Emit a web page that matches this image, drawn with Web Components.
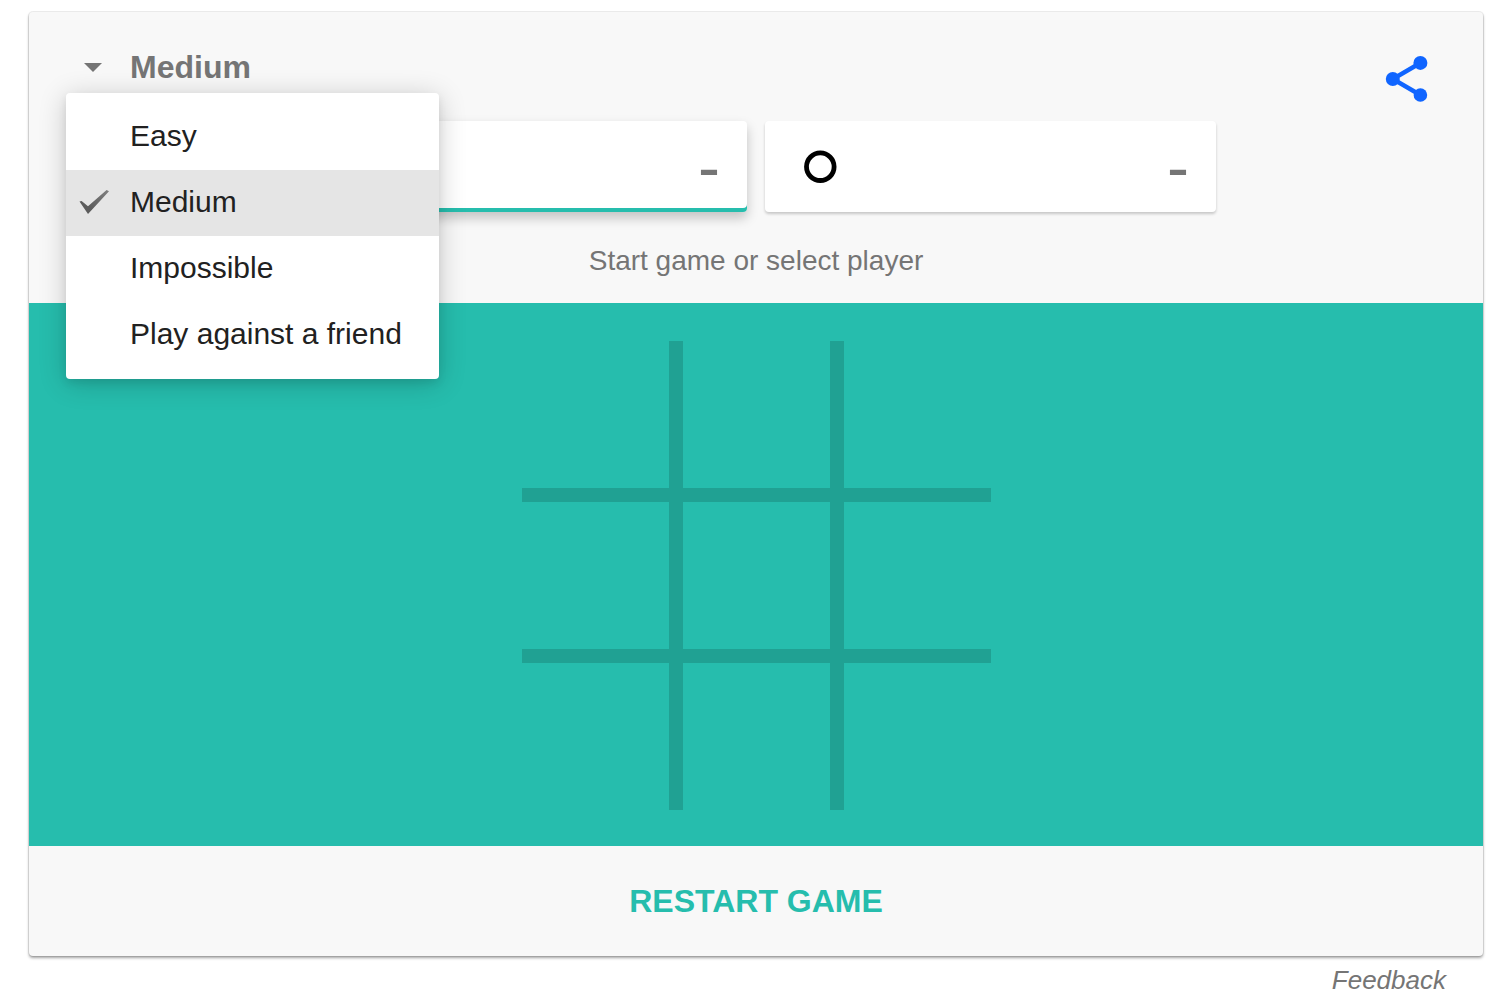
<!DOCTYPE html>
<html lang="en">
<head>
<meta charset="utf-8">
<meta name="viewport" content="width=device-width, initial-scale=1">
<title>Tic-tac-toe</title>
<style>
  body {
    margin: 0;
    padding: 12px 23px 9px 29px;
    background: #fff;
    color: #757575;
    font-family: "Liberation Sans", Arial, sans-serif;
    --teal: #26bdad;
    --line: #20a193;
  }
</style>
</head>
<body>
<game-app></game-app>

<script>
  class Base extends HTMLElement {
    connectedCallback() {
      if (this.shadowRoot) return;
      this.attachShadow({ mode: "open" }).innerHTML =
        `<style>* { box-sizing: border-box } button { font: inherit; color: inherit; background: none; border: 0; padding: 0; margin: 0; cursor: pointer }</style>` + this.render();
      this.ready();
    }
    ready() {}
  }

  customElements.define("level-option", class extends Base {
    render() {
      const on = this.hasAttribute("selected");
      return `<style>
        :host { display: block; color: #212121; font-size: 30px; line-height: 34px }
        :host([selected]) { background: #e5e5e5 }
        button { display: flex; align-items: center; width: 100%; height: 66px; padding: 0 37px 2px 12px; white-space: nowrap; text-align: left }
        .mark { width: 32px; height: 28px; margin-right: 20px; flex: none }
        svg { display: block }
      </style>
      <button type="button" role="menuitemradio" aria-checked="${on}">
        <span class="mark">${on ? `<svg width="32" height="28" viewBox="0 0 32 28" aria-hidden="true">
          <defs><linearGradient id="g" x1="0" y1="1" x2="1" y2="0"><stop offset=".3" stop-color="#5c5c5c"/><stop offset="1" stop-color="#808080"/></linearGradient></defs>
          <path d="M1.5 13.4 L3.6 13 L10 18.2 L28.6 2 L31 3.2 L10 26 Z" fill="url(#g)"/></svg>` : ""}</span>
        <slot></slot>
      </button>`;
    }
  });

  customElements.define("level-picker", class extends Base {
    render() {
      return `<style>
        :host { display: block; position: relative }
        .toggle { display: flex; align-items: center; height: 48px; padding-left: 18px; font-size: 32px; line-height: 36px; font-weight: bold }
        .toggle svg { margin-right: 28px }
        .menu { position: absolute; z-index: 2; top: 50px; left: 0; padding: 11px 0; background: #fff; border-radius: 4px;
          box-shadow: 0 4px 8px rgba(0,0,0,.08), 0 4px 28px rgba(0,0,0,.2) }
        .menu[hidden] { display: none }
      </style>
      <button class="toggle" type="button" aria-haspopup="menu" aria-expanded="true">
        <svg width="18" height="9" viewBox="0 0 18 9" aria-hidden="true"><path d="M0 0H18L9 9Z" fill="#757575"/></svg>Medium</button>
      <div class="menu" role="menu">
        <level-option>Easy</level-option>
        <level-option selected>Medium</level-option>
        <level-option>Impossible</level-option>
        <level-option>Play against a friend</level-option>
      </div>`;
    }
    ready() {
      const toggle = this.shadowRoot.querySelector(".toggle");
      const menu = this.shadowRoot.querySelector(".menu");
      toggle.addEventListener("click", () => {
        menu.hidden = !menu.hidden;
        toggle.setAttribute("aria-expanded", String(!menu.hidden));
      });
    }
  });

  customElements.define("share-button", class extends Base {
    render() {
      return `<style>:host { display: block } button, svg { display: block }</style>
      <button type="button" aria-label="Share">
        <svg width="48" height="48" viewBox="0 0 48 48" aria-hidden="true">
          <path d="M37.3 8 L9.8 24 L37.3 40" fill="none" stroke="#1065ff" stroke-width="4.4"/>
          <g fill="#1065ff"><circle cx="37.4" cy="7.9" r="7"/><circle cx="9.8" cy="24" r="7"/><circle cx="37.4" cy="40" r="6.8"/></g>
        </svg>
      </button>`;
    }
  });

  customElements.define("player-tile", class extends Base {
    render() {
      const shape = this.getAttribute("mark") === "O"
        ? `<circle cx="18.3" cy="17.7" r="13.8"/>`
        : `<path d="M6 6 L30 30 M30 6 L6 30"/>`;
      return `<style>
        :host { display: block; flex: 0 1 451px }
        button { display: flex; align-items: center; justify-content: space-between; width: 100%; height: 91px; padding: 0 27px 0 37px;
          background: #fff; border-radius: 4px; box-shadow: 0 2px 3px rgba(0,0,0,.2) }
        :host([active]) button { box-shadow: inset 0 -4px var(--teal), 0 6px 12px rgba(0,0,0,.22) }
        .score { font-size: 66px; line-height: 66px }
      </style>
      <button type="button" aria-label="Player ${this.getAttribute("mark")}">
        <svg width="36" height="36" viewBox="0 0 36 36" fill="none" stroke="#000" stroke-width="4.8" aria-hidden="true">${shape}</svg>
        <span class="score"><slot></slot></span>
      </button>`;
    }
  });

  customElements.define("game-board", class extends Base {
    render() {
      return `<style>
        :host { display: flex; justify-content: center; padding: 38px 0 36px; background: var(--teal) }
        .grid { display: grid; grid-template: repeat(3, 147px) / repeat(3, 147px); gap: 14px; background: var(--line) }
        button { background: var(--teal); border-radius: 0 }
      </style>
      <div class="grid">${Array.from({ length: 9 }, (_, i) => `<button type="button" aria-label="Square ${i + 1}"></button>`).join("")}</div>`;
    }
  });

  customElements.define("game-app", class extends Base {
    render() {
      return `<style>
        :host { display: block }
        .card { background: #f8f8f8; border-radius: 4px; box-shadow: 0 0 0 1px rgba(0,0,0,.07), 0 2px 3px rgba(0,0,0,.36) }
        .bar { display: flex; justify-content: space-between; align-items: flex-start; padding: 31px 52px 18px 37px }
        share-button { margin-top: 12px }
        .players { display: flex; justify-content: center; gap: 18px }
        .status { margin: 0; padding: 33px 0 26px; font-size: 28px; line-height: 32px; text-align: center }
        .actions { display: flex; justify-content: center; padding: 37px 0 }
        .actions button { color: var(--teal); font-size: 32px; line-height: 36px; font-weight: bold }
        footer { display: flex; justify-content: flex-end; padding: 9px 37px 0 0 }
        a { color: inherit; text-decoration: none; font-size: 26px; line-height: 30px; font-style: italic }
      </style>
      <main class="card">
        <div class="bar"><level-picker></level-picker><share-button></share-button></div>
        <div class="players">
          <player-tile mark="X" active>-</player-tile>
          <player-tile mark="O">-</player-tile>
        </div>
        <p class="status">Start game or select player</p>
        <game-board></game-board>
        <div class="actions"><button type="button">RESTART GAME</button></div>
      </main>
      <footer><a href="#feedback">Feedback</a></footer>`;
    }
  });
</script>
</body>
</html>
